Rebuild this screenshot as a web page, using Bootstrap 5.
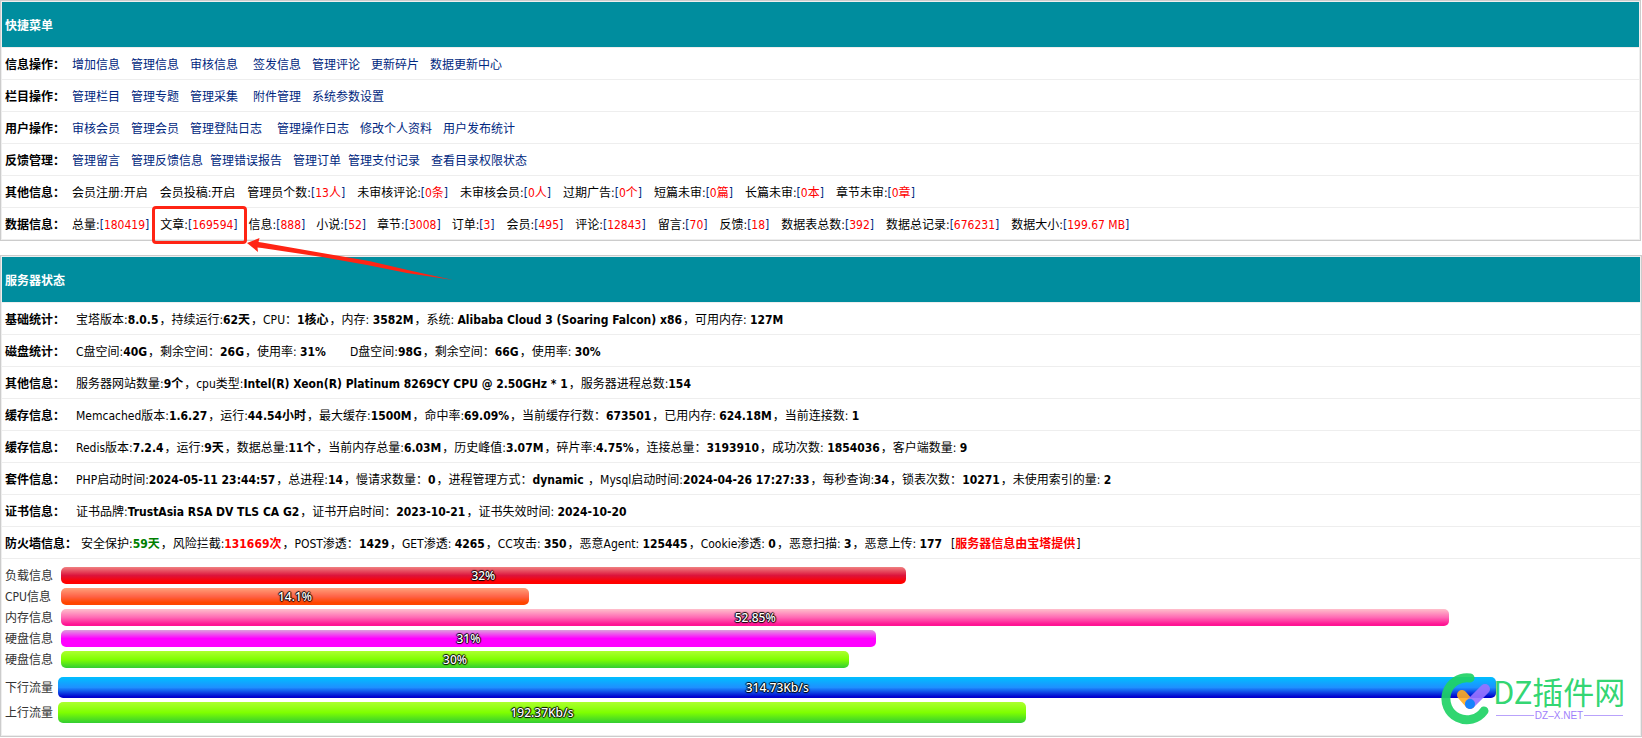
<!DOCTYPE html>
<html lang="zh-CN">
<head>
<meta charset="utf-8">
<meta name="viewport" content="width=device-width, initial-scale=1">
<title>后台首页</title>
<link href="https://cdn.jsdelivr.net/npm/bootstrap@5.3.0/dist/css/bootstrap.min.css" rel="stylesheet">
<style>
  body {
    font-family: "DejaVu Sans Condensed", "Noto Sans CJK SC", sans-serif;
    font-size: 12px;
    line-height: 18px;
    color: #000;
    background: #fff;
  }
  .panel { border: 1px solid #ccc; background: #fff; }
  .menu-panel { margin: 0 1px 14px 0; }
  .panel-inner { border: 1px solid #eee; }
  .panel-title {
    height: 46px;
    margin: 0;
    padding: 3px 0 0 3px;
    background: #008d9e;
    border-bottom: 1px solid #eee;
    color: #fff;
    font-size: 12px;
    font-weight: 700;
  }
  .line {
    min-height: 32px;
    padding: 2px 0 0 3px;
    border-bottom: 1px solid #eee;
    white-space: nowrap;
  }
  .menu-line { gap: 11px; }
  .menu-line:last-child { border-bottom: 0; min-height: 31px; }
  .menu-line > strong { margin-right: -4px; }
  .menu-line a { color: #002780; text-decoration: none; }
  .menu-line a:hover { text-decoration: underline; }
  .menu-line em, .alert-text { font-style: normal; color: #f00; }
  .counts { display: flex; gap: 12px; }
  .more { margin-left: 4px; }
  .less { margin-left: -4px; }
  .stat-line { gap: 11px; }
  .stat-line b { margin-right: 1px; }
  .stat-line.firewall { gap: 4px; }
  .safe-text { color: green; }

  .marked-item { position: relative; }
  .marker-frame {
    position: absolute;
    inset: -10px -9px -10px -8px;
    border: 3px solid #ff2414;
    border-radius: 4px;
  }
  .marker-arrow { position: absolute; left: 87px; top: 21px; z-index: 2; pointer-events: none; }

  .meters { padding: 8px 3px 0; color: #333; }
  .meter { height: 17px; margin-bottom: 4px; }
  .meter-name { width: 56px; flex: none; }
  .meter .progress, .meter .progress-bar { height: 17px; }
  .meter .progress { background: none; border-radius: 0; font-size: 12px; }
  .meter .progress-bar {
    border-radius: 5px;
    color: #fff;
    font-family: "Noto Sans", sans-serif;
    font-weight: 500;
    text-shadow: 1px 0 1px #000, -1px 0 1px #000, 0 1px 1px #000, 0 -1px 1px #000;
  }
  .meters-flow { padding: 5px 3px 8px; color: #333; }
  .flow { height: 21px; }
  .flow .meter-name { width: 53px; }
  .flow .progress, .flow .progress-bar { height: 21px; }
  .bar-red { background: linear-gradient(lightcoral, crimson 50%, red 85%); }
  .bar-orange { background: linear-gradient(lightsalmon, tomato 50%, orangered 85%); }
  .bar-pink { background: linear-gradient(pink, hotpink 50%, deeppink 90%); }
  .bar-magenta { background: linear-gradient(plum, magenta 50%); }
  .bar-green { background: linear-gradient(greenyellow, chartreuse 50%, limegreen); }
  .bar-blue { background: linear-gradient(deepskyblue, dodgerblue 50%, mediumblue 95%); }
  .site-mark { position: absolute; right: 14px; bottom: 8px; }
</style>
</head>
<body>
<section class="panel menu-panel">
  <div class="panel-inner">
    <h2 class="panel-title d-flex align-items-center">快捷菜单</h2>
    <div class="line menu-line d-flex align-items-center"><strong>信息操作：</strong><a href="#">增加信息</a><a href="#">管理信息</a><a href="#">审核信息</a><a href="#" class="more">签发信息</a><a href="#">管理评论</a><a href="#">更新碎片</a><a href="#">数据更新中心</a></div>
    <div class="line menu-line d-flex align-items-center"><strong>栏目操作：</strong><a href="#">管理栏目</a><a href="#">管理专题</a><a href="#">管理采集</a><a href="#" class="more">附件管理</a><a href="#">系统参数设置</a></div>
    <div class="line menu-line d-flex align-items-center"><strong>用户操作：</strong><a href="#">审核会员</a><a href="#">管理会员</a><a href="#">管理登陆日志</a><a href="#" class="more">管理操作日志</a><a href="#">修改个人资料</a><a href="#">用户发布统计</a></div>
    <div class="line menu-line d-flex align-items-center"><strong>反馈管理：</strong><a href="#">管理留言</a><a href="#">管理反馈信息</a><a href="#" class="less">管理错误报告</a><a href="#">管理订单</a><a href="#" class="less">管理支付记录</a><a href="#">查看目录权限状态</a></div>
    <div class="line menu-line d-flex align-items-center"><strong>其他信息：</strong><div class="counts"><span>会员注册:开启</span><span>会员投稿:开启</span><span>管理员个数:<a href="#">[<em>13人</em>]</a></span><span>未审核评论:<a href="#">[<em>0条</em>]</a></span><span>未审核会员:<a href="#">[<em>0人</em>]</a></span><span>过期广告:<a href="#">[<em>0个</em>]</a></span><span>短篇未审:<a href="#">[<em>0篇</em>]</a></span><span>长篇未审:<a href="#">[<em>0本</em>]</a></span><span>章节未审:<a href="#">[<em>0章</em>]</a></span></div></div>
    <div class="line menu-line d-flex align-items-center"><strong>数据信息：</strong><span>总量:<a href="#">[<em>180419</em>]</a></span><span class="marked-item">文章:<a href="#">[<em>169594</em>]</a><i class="marker-frame"></i><svg class="marker-arrow" width="208" height="46" viewBox="0 0 208 46" aria-hidden="true"><path d="M0 6 12.500 1 11.500 5 15 5.500 75 16 122 24 165 34 206 43 160 36 120 28 75 20 15 11 10.500 10.500 11 15Z" fill="#ff2414"/></svg></span><span>信息:<a href="#">[<em>888</em>]</a></span><span>小说:<a href="#">[<em>52</em>]</a></span><span>章节:<a href="#">[<em>3008</em>]</a></span><div class="counts"><span>订单:<a href="#">[<em>3</em>]</a></span><span>会员:<a href="#">[<em>495</em>]</a></span><span>评论:<a href="#">[<em>12843</em>]</a></span><span>留言:<a href="#">[<em>70</em>]</a></span><span>反馈:<a href="#">[<em>18</em>]</a></span><span>数据表总数:<a href="#">[<em>392</em>]</a></span><span>数据总记录:<a href="#">[<em>676231</em>]</a></span><span>数据大小:<a href="#">[<em>199.67 MB</em>]</a></span></div></div>
  </div>
</section>

<section class="panel position-relative">
  <div class="panel-inner">
    <h2 class="panel-title d-flex align-items-center">服务器状态</h2>
    <div class="line stat-line d-flex align-items-center"><strong>基础统计：</strong><span>宝塔版本:<b>8.0.5</b>，持续运行:<b>62天</b>，CPU：<b>1核心</b>，内存: <b>3582M</b>，系统: <b>Alibaba Cloud 3 (Soaring Falcon) x86</b>，可用内存: <b>127M</b></span></div>
    <div class="line stat-line d-flex align-items-center"><strong>磁盘统计：</strong><span>C盘空间:<b>40G</b>，剩余空间：<b>26G</b>，使用率: <b>31%</b></span><span class="ms-2 ps-1">D盘空间:<b>98G</b>，剩余空间：<b>66G</b>，使用率: <b>30%</b></span></div>
    <div class="line stat-line d-flex align-items-center"><strong>其他信息：</strong><span>服务器网站数量:<b>9个</b>，cpu类型:<b>Intel(R) Xeon(R) Platinum 8269CY CPU @ 2.50GHz * 1</b>，服务器进程总数:<b>154</b></span></div>
    <div class="line stat-line d-flex align-items-center"><strong>缓存信息：</strong><span>Memcached版本:<b>1.6.27</b>，运行:<b>44.54小时</b>，最大缓存:<b>1500M</b>，命中率:<b>69.09%</b>，当前缓存行数：<b>673501</b>，已用内存: <b>624.18M</b>，当前连接数: <b>1</b></span></div>
    <div class="line stat-line d-flex align-items-center"><strong>缓存信息：</strong><span>Redis版本:<b>7.2.4</b>，运行:<b>9天</b>，数据总量:<b>11个</b>，当前内存总量:<b>6.03M</b>，历史峰值:<b>3.07M</b>，碎片率:<b>4.75%</b>，连接总量：<b>3193910</b>，成功次数: <b>1854036</b>，客户端数量: <b>9</b></span></div>
    <div class="line stat-line d-flex align-items-center"><strong>套件信息：</strong><span>PHP启动时间:<b>2024-05-11 23:44:57</b>，总进程:<b>14</b>，慢请求数量：<b>0</b>，进程管理方式：<b>dynamic</b> ，Mysql启动时间:<b>2024-04-26 17:27:33</b>，每秒查询:<b>34</b>，锁表次数：<b>10271</b>，未使用索引的量: <b>2</b></span></div>
    <div class="line stat-line d-flex align-items-center"><strong>证书信息：</strong><span>证书品牌:<b>TrustAsia RSA DV TLS CA G2</b>，证书开启时间：<b>2023-10-21</b>，证书失效时间: <b>2024-10-20</b></span></div>
    <div class="line stat-line firewall d-flex align-items-center"><strong>防火墙信息：</strong><span>安全保护:<b class="safe-text">59天</b>，风险拦截:<b class="alert-text">131669次</b>，POST渗透：<b>1429</b>，GET渗透: <b>4265</b>，CC攻击: <b>350</b>，恶意Agent: <b>125445</b>，Cookie渗透: <b>0</b>，恶意扫描: <b>3</b>，恶意上传: <b>177</b></span><span class="ms-1">[<b class="alert-text">服务器信息由宝塔提供</b>]</span></div>

    <div class="meters">
      <div class="meter d-flex align-items-center"><span class="meter-name">负载信息</span><div class="progress flex-grow-1"><div class="progress-bar bar-red" style="width:53.6%">32%</div></div></div>
      <div class="meter d-flex align-items-center"><span class="meter-name">CPU信息</span><div class="progress flex-grow-1"><div class="progress-bar bar-orange" style="width:29.7%">14.1%</div></div></div>
      <div class="meter d-flex align-items-center"><span class="meter-name">内存信息</span><div class="progress flex-grow-1"><div class="progress-bar bar-pink" style="width:88.1%">52.85%</div></div></div>
      <div class="meter d-flex align-items-center"><span class="meter-name">硬盘信息</span><div class="progress flex-grow-1"><div class="progress-bar bar-magenta" style="width:51.7%">31%</div></div></div>
      <div class="meter d-flex align-items-center"><span class="meter-name">硬盘信息</span><div class="progress flex-grow-1"><div class="progress-bar bar-green" style="width:50%">30%</div></div></div>
    </div>
    <div class="meters-flow">
      <div class="meter flow d-flex align-items-center"><span class="meter-name">下行流量</span><div class="progress flex-grow-1"><div class="progress-bar bar-blue" style="width:91.1%">314.73Kb/s</div></div></div>
      <div class="meter flow d-flex align-items-center"><span class="meter-name">上行流量</span><div class="progress flex-grow-1"><div class="progress-bar bar-green" style="width:61.3%">192.37Kb/s</div></div></div>
    </div>
  </div>

  <svg class="site-mark" width="186" height="64" viewBox="0 -8 186 64" role="img" aria-label="DZ插件网">
    <path d="M29 6A21 21 0 1 0 43 39" fill="none" stroke="#20d265" stroke-opacity=".92" stroke-width="9" stroke-linecap="round"/>
    <path d="M21 23 29 32" stroke="#ffac20" stroke-opacity=".9" stroke-width="10" stroke-linecap="round"/>
    <path d="M44 17 29 32" stroke="#9873ff" stroke-opacity=".92" stroke-width="10" stroke-linecap="round"/>
    <circle cx="29" cy="32" r="5" fill="#1684fc"/>
    <text x="52" y="32" font-family="Noto Sans CJK SC, sans-serif" font-size="31" fill="#20d265" fill-opacity=".92">DZ插件网</text>
    <path d="M55 43.500H93M143 43.500H182" stroke="#b9a2fb"/>
    <text x="118" y="47" text-anchor="middle" font-family="Liberation Sans, sans-serif" font-size="10" fill="#a081fb">DZ–X.NET</text>
  </svg>
</section>
<script src="https://cdn.jsdelivr.net/npm/bootstrap@5.3.0/dist/js/bootstrap.bundle.min.js"></script>
</body>
</html>
